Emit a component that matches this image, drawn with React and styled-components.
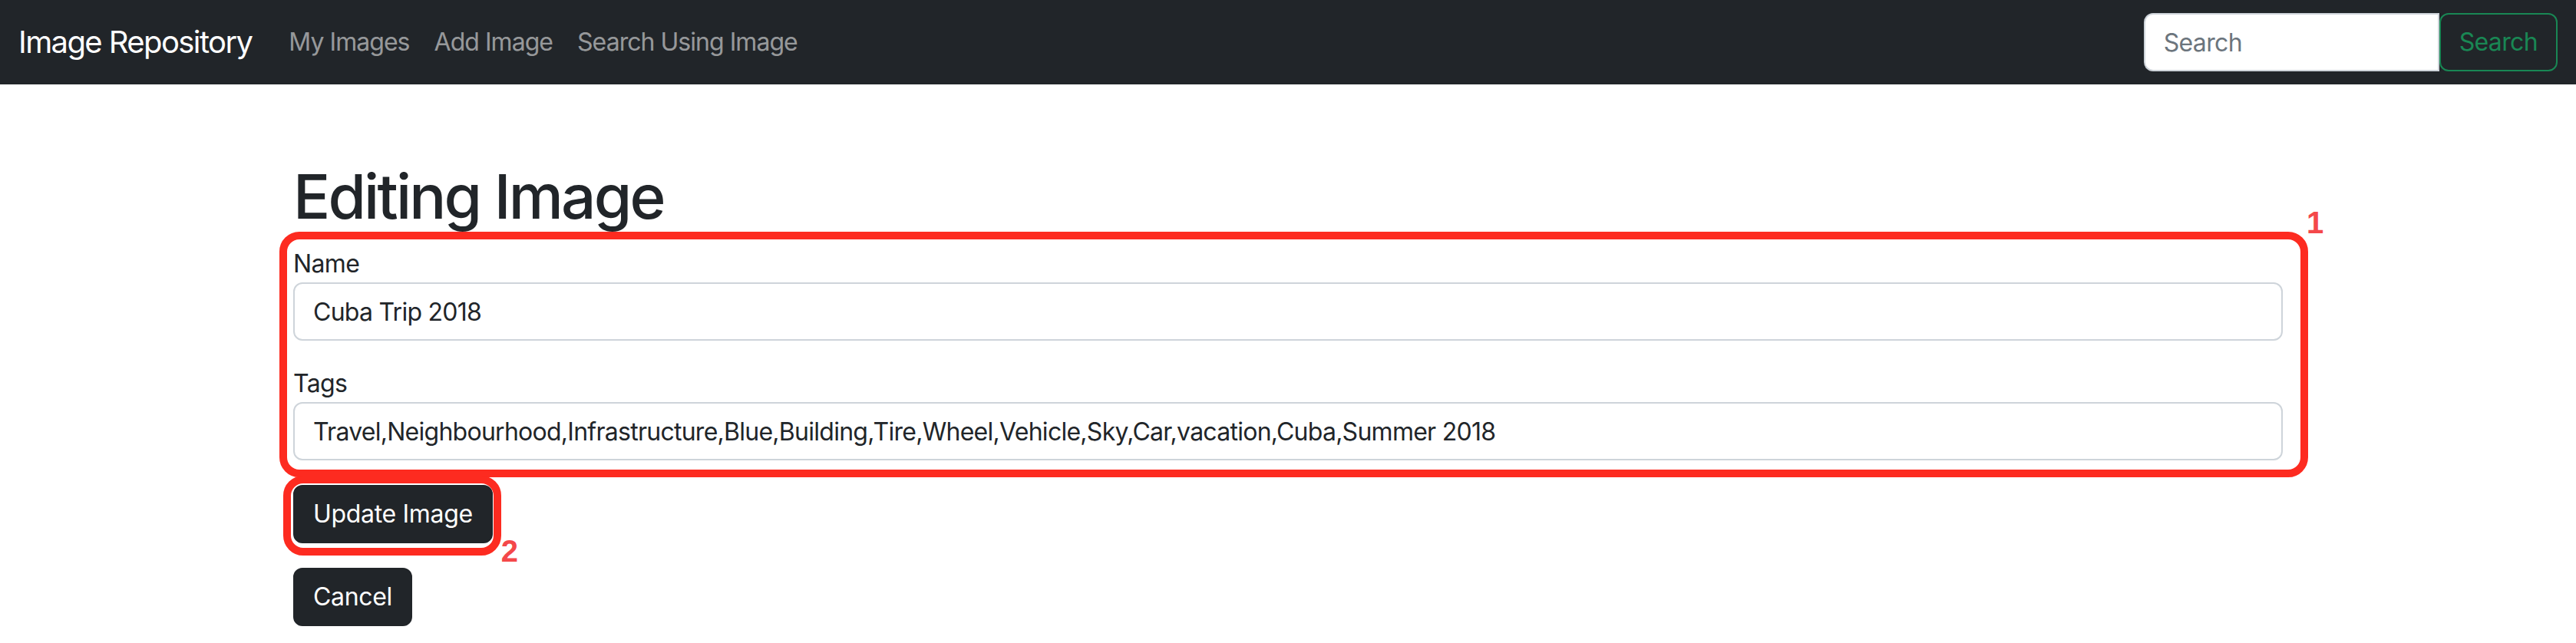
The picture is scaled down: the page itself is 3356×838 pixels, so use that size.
import React from 'react'
import styled, {createGlobalStyle} from 'styled-components'

const GlobalStyle = createGlobalStyle`
  *, *::before, *::after {
    box-sizing: border-box;
  }
  html, body {
    margin: 0;
    padding: 0;
    background: #fff;
  }
  body {
    font-family: Inter, "Noto Sans", "Liberation Sans", sans-serif;
    font-size: 32px;
    line-height: 1.5;
    color: #212529;
  }
`

const Navbar = styled.nav`
  display: flex;
  align-items: center;
  justify-content: space-between;
  height: 110px;
  padding: 0 24px;
  background: #212529;
`

const NavLeft = styled.div`
  display: flex;
  align-items: center;
`

const Brand = styled.a`
  margin-right: 32px;
  font-size: 40px;
  line-height: 60px;
  letter-spacing: -0.04em;
  color: #fff;
  text-decoration: none;
`

const NavLink = styled.a`
  padding: 0 16px;
  font-size: 32px;
  line-height: 48px;
  letter-spacing: -0.03em;
  color: rgba(255, 255, 255, 0.55);
  text-decoration: none;
`

const SearchForm = styled.form`
  display: flex;
`

const SearchInput = styled.input`
  width: 385px;
  height: 76px;
  padding: 12px 24px;
  font-family: inherit;
  font-size: 32px;
  line-height: 48px;
  letter-spacing: -0.02em;
  color: #212529;
  background: #fff;
  border: 2px solid #ced4da;
  border-radius: 12px 0 0 12px;
  outline: none;
  &::placeholder {
    color: #6c757d;
  }
`

const SearchButton = styled.button`
  height: 76px;
  padding: 12px 24px;
  font-family: inherit;
  font-size: 32px;
  line-height: 48px;
  letter-spacing: -0.02em;
  color: #198754;
  background: transparent;
  border: 2px solid #198754;
  border-radius: 12px;
`

const Container = styled.main`
  max-width: 2640px;
  margin: 98px auto 0;
  padding: 0 24px;
`

const Title = styled.h1`
  margin: 0 0 16px;
  font-size: 80px;
  font-weight: 500;
  line-height: 1.2;
  letter-spacing: -0.035em;
`

const Fields = styled.div`
  position: relative;
  display: flex;
  flex-direction: column;
  gap: 32px;
`

const Group = styled.div``

const Label = styled.label`
  display: block;
  font-size: 32px;
  line-height: 48px;
  letter-spacing: -0.02em;
`

const TextInput = styled.input`
  display: block;
  width: 100%;
  height: 76px;
  padding: 12px 24px;
  font-family: inherit;
  font-size: 32px;
  line-height: 48px;
  letter-spacing: -0.023em;
  color: #212529;
  background: #fff;
  border: 2px solid #ced4da;
  border-radius: 12px;
  outline: none;
`

const Actions = styled.div`
  display: flex;
  flex-direction: column;
  align-items: flex-start;
  gap: 32px;
  margin-top: 32px;
`

const ButtonWrap = styled.div`
  position: relative;
`

const DarkButton = styled.button`
  display: block;
  height: 76px;
  padding: 12px 24px;
  font-family: inherit;
  font-size: 32px;
  line-height: 48px;
  letter-spacing: -0.01em;
  color: #fff;
  background: #212529;
  border: 2px solid #212529;
  border-radius: 12px;
`

// red call-out boxes drawn over the screenshot
const Annotation = styled.div`
  position: absolute;
  top: ${p => p.$top}px;
  right: ${p => p.$right}px;
  bottom: ${p => p.$bottom}px;
  left: ${p => p.$left}px;
  border: 10px solid #fd2b20;
  border-radius: 26px;
  pointer-events: none;
`

const AnnotationNumber = styled.span`
  position: absolute;
  top: ${p => p.$top};
  left: ${p => p.$left};
  font-family: "Liberation Sans", Arial, sans-serif;
  font-weight: 700;
  font-size: 40px;
  line-height: 1;
  color: #f4484a;
`

export default function App() {
  return (
    <>
      <GlobalStyle />
      <Navbar>
        <NavLeft>
          <Brand href="#">Image Repository</Brand>
          <NavLink href="#">My Images</NavLink>
          <NavLink href="#">Add Image</NavLink>
          <NavLink href="#">Search Using Image</NavLink>
        </NavLeft>
        <SearchForm onSubmit={e => e.preventDefault()}>
          <SearchInput type="search" placeholder="Search" />
          <SearchButton type="submit">Search</SearchButton>
        </SearchForm>
      </Navbar>
      <Container>
        <Title>Editing Image</Title>
        <Fields>
          <Group>
            <Label>Name</Label>
            <TextInput defaultValue="Cuba Trip 2018" />
          </Group>
          <Group>
            <Label>Tags</Label>
            <TextInput defaultValue="Travel,Neighbourhood,Infrastructure,Blue,Building,Tire,Wheel,Vehicle,Sky,Car,vacation,Cuba,Summer 2018" />
          </Group>
          <Annotation $top={-18} $right={-33} $bottom={-22} $left={-18}>
            <AnnotationNumber $top="-42px" $left="calc(100% + 8px)">1</AnnotationNumber>
          </Annotation>
        </Fields>
        <Actions>
          <ButtonWrap>
            <DarkButton type="button">Update Image</DarkButton>
            <Annotation $top={-12} $right={-11} $bottom={-16} $left={-13}>
              <AnnotationNumber $top="calc(100% - 16px)" $left="calc(100% + 10px)">2</AnnotationNumber>
            </Annotation>
          </ButtonWrap>
          <DarkButton type="button">Cancel</DarkButton>
        </Actions>
      </Container>
    </>
  )
}
